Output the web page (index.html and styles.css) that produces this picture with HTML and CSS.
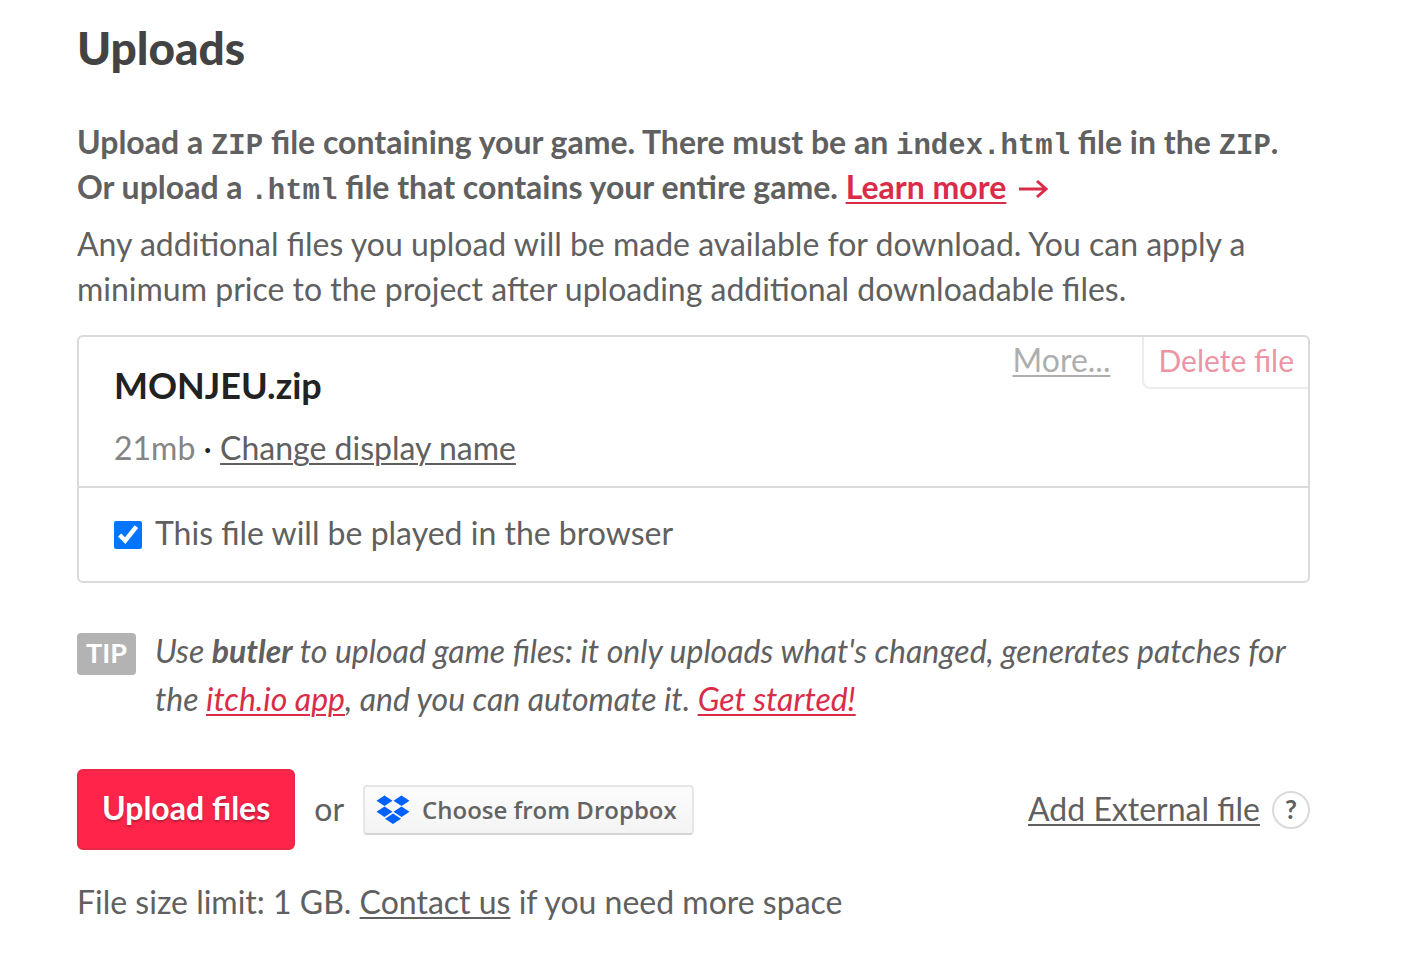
FILE: index.html
```
<!DOCTYPE html>
<html lang="en">
<head>
    <meta charset="UTF-8">
    <meta name="viewport" content="width=device-width, initial-scale=1.0">
    <title>Uploads</title>
    <link rel="stylesheet" href="styles.css">
</head>
<body>
    <main class="uploads">
        <h2>Uploads</h2>
        <p class="intro">Upload a <code>ZIP</code> file containing your game. There must be an <code>index.html</code> file in the <code>ZIP</code>. Or upload a <code>.html</code> file that contains your entire game. <a class="red" href="#">Learn more</a>
            <svg class="arrow" width="30" height="20" viewBox="0 0 30 20" aria-hidden="true"><path d="M1 10H28M19 2L28 10L19 18"/></svg></p>
        <p class="sub">Any additional files you upload will be made available for download. You can apply a minimum price to the project after uploading additional downloadable files.</p>

        <section class="file">
            <div class="file_top">
                <div class="file_info">
                    <h3>MONJEU.zip</h3>
                    <div class="meta"><span class="size">21mb</span> · <a href="#">Change display name</a></div>
                </div>
                <div class="file_tools">
                    <a href="#">More...</a>
                    <button type="button" class="delete_btn">Delete file</button>
                </div>
            </div>
            <div class="file_option">
                <input type="checkbox" id="playInBrowser" checked>
                <label for="playInBrowser">This file will be played in the browser</label>
            </div>
        </section>

        <div class="tip">
            <span class="tip_label">TIP</span>
            <p>Use <strong>butler</strong> to upload game files: it only uploads what's changed, generates patches for the <a class="red" href="#">itch.io app</a>, and you can automate it. <a class="red" href="#">Get started!</a></p>
        </div>

        <div class="actions">
            <button type="button" class="upload_btn">Upload files</button>
            <span>or</span>
            <button type="button" class="dropbox_btn">
                <svg width="34" height="30" viewBox="0 0 34 30" aria-hidden="true">
                    <path d="M8.500 0.500L16.500 5.700L8.500 10.900L0.500 5.700ZM25.500 0.500L33.500 5.700L25.500 10.900L17.500 5.700ZM8.500 11.500L16.500 16.700L8.500 21.900L0.500 16.700ZM25.500 11.500L33.500 16.700L25.500 21.900L17.500 16.700ZM17 18.600L25 23.800L17 29L9 23.800Z"/>
                </svg>
                Choose from Dropbox
            </button>
            <div class="external">
                <a href="#">Add External file</a>
                <button type="button" class="help_btn">?</button>
            </div>
        </div>

        <p class="limit">File size limit: 1 GB. <a href="#">Contact us</a> if you need more space</p>
    </main>
</body>
</html>
```
FILE: styles.css
```
* {
    box-sizing: border-box;
}
body {
    margin: 0;
    background-color: #fff;
    color: #606060;
    font-family: Lato, sans-serif;
    font-size: 32px;
    line-height: 45px;
}
.uploads {
    padding: 18px 106px 40px 77px;
}
h2, h3, p {
    margin: 0;
}
h2 {
    color: #434343;
    font-size: 46px;
    font-weight: 900;
    line-height: 60px;
    margin-bottom: 41px;
}
a {
    color: inherit;
    text-decoration-thickness: 2px;
    text-underline-offset: 3px;
}
.red {
    color: #da2c49;
}
button {
    font-family: inherit;
    cursor: pointer;
}
.intro {
    font-weight: 700;
    margin-bottom: 12px;
}
code {
    font-family: "Liberation Mono", monospace;
    font-size: 29px;
    line-height: 1;
}
.arrow {
    margin-left: 4px;
    fill: none;
    stroke: #da2c49;
    stroke-width: 3;
}
.file {
    margin-top: 24px;
    border: 2px solid #dadada;
    border-radius: 6px;
}
.file_top {
    display: flex;
    justify-content: space-between;
    align-items: flex-start;
    border-bottom: 2px solid #dadada;
}
.file_info {
    padding: 24px 35px 16px;
}
h3 {
    color: #222;
    font-size: 36px;
    font-weight: 700;
    line-height: 48px;
    margin-bottom: 16px;
}
.meta {
    color: #222;
}
.meta a {
    color: #606060;
}
.size {
    color: #858585;
}
.file_tools {
    display: flex;
    align-items: flex-start;
    gap: 32px;
    opacity: 0.5;
}
.delete_btn {
    height: 52px;
    padding: 0 14px 4px;
    background: none;
    border: solid #dadada;
    border-width: 0 0 2px 2px;
    border-radius: 0 0 0 8px;
    color: #da2c49;
    font-size: 30px;
}
.file_option {
    display: flex;
    align-items: center;
    gap: 13px;
    padding: 22px 35px 26px;
}
.file_option input {
    width: 28px;
    height: 28px;
    margin: 4px 0 0;
    accent-color: #0075ff;
}
.tip {
    display: flex;
    align-items: flex-start;
    gap: 19px;
    margin-top: 44px;
    font-style: italic;
    line-height: 48px;
}
.tip_label {
    margin-top: 6px;
    padding: 0 9px;
    height: 42px;
    background-color: #b3b3b3;
    border-radius: 4px;
    color: #fff;
    font-size: 27px;
    font-style: normal;
    font-weight: 700;
    line-height: 40px;
}
.actions {
    display: flex;
    align-items: center;
    gap: 19px;
    margin-top: 46px;
}
.actions > span, .external a {
    padding-bottom: 3px;
}
.upload_btn {
    height: 81px;
    padding: 0 23px 4px;
    background-color: #ff2449;
    border: 2px solid #e92747;
    border-radius: 6px;
    color: #fff;
    font-size: 32px;
    font-weight: 700;
    text-shadow: 0 2px 2px #b3213b;
}
.dropbox_btn {
    display: flex;
    align-items: center;
    gap: 12px;
    height: 50px;
    padding: 0 15px 0 11px;
    background: linear-gradient(#fcfcfc, #f4f4f4);
    border: 2px solid #e6e6e6;
    border-bottom-color: #d4d4d4;
    border-radius: 4px;
    color: #636363;
    font-family: "Open Sans", sans-serif;
    font-size: 24px;
    font-weight: 600;
}
.dropbox_btn svg {
    fill: #0061fe;
}
.external {
    display: flex;
    align-items: center;
    gap: 12px;
    margin-left: auto;
}
.help_btn {
    width: 38px;
    height: 38px;
    padding: 0 0 2px;
    background: none;
    border: 2px solid #dadada;
    border-radius: 50%;
    color: #606060;
    font-size: 26px;
    font-weight: 700;
    line-height: 30px;
}
.limit {
    margin-top: 29px;
}
```
